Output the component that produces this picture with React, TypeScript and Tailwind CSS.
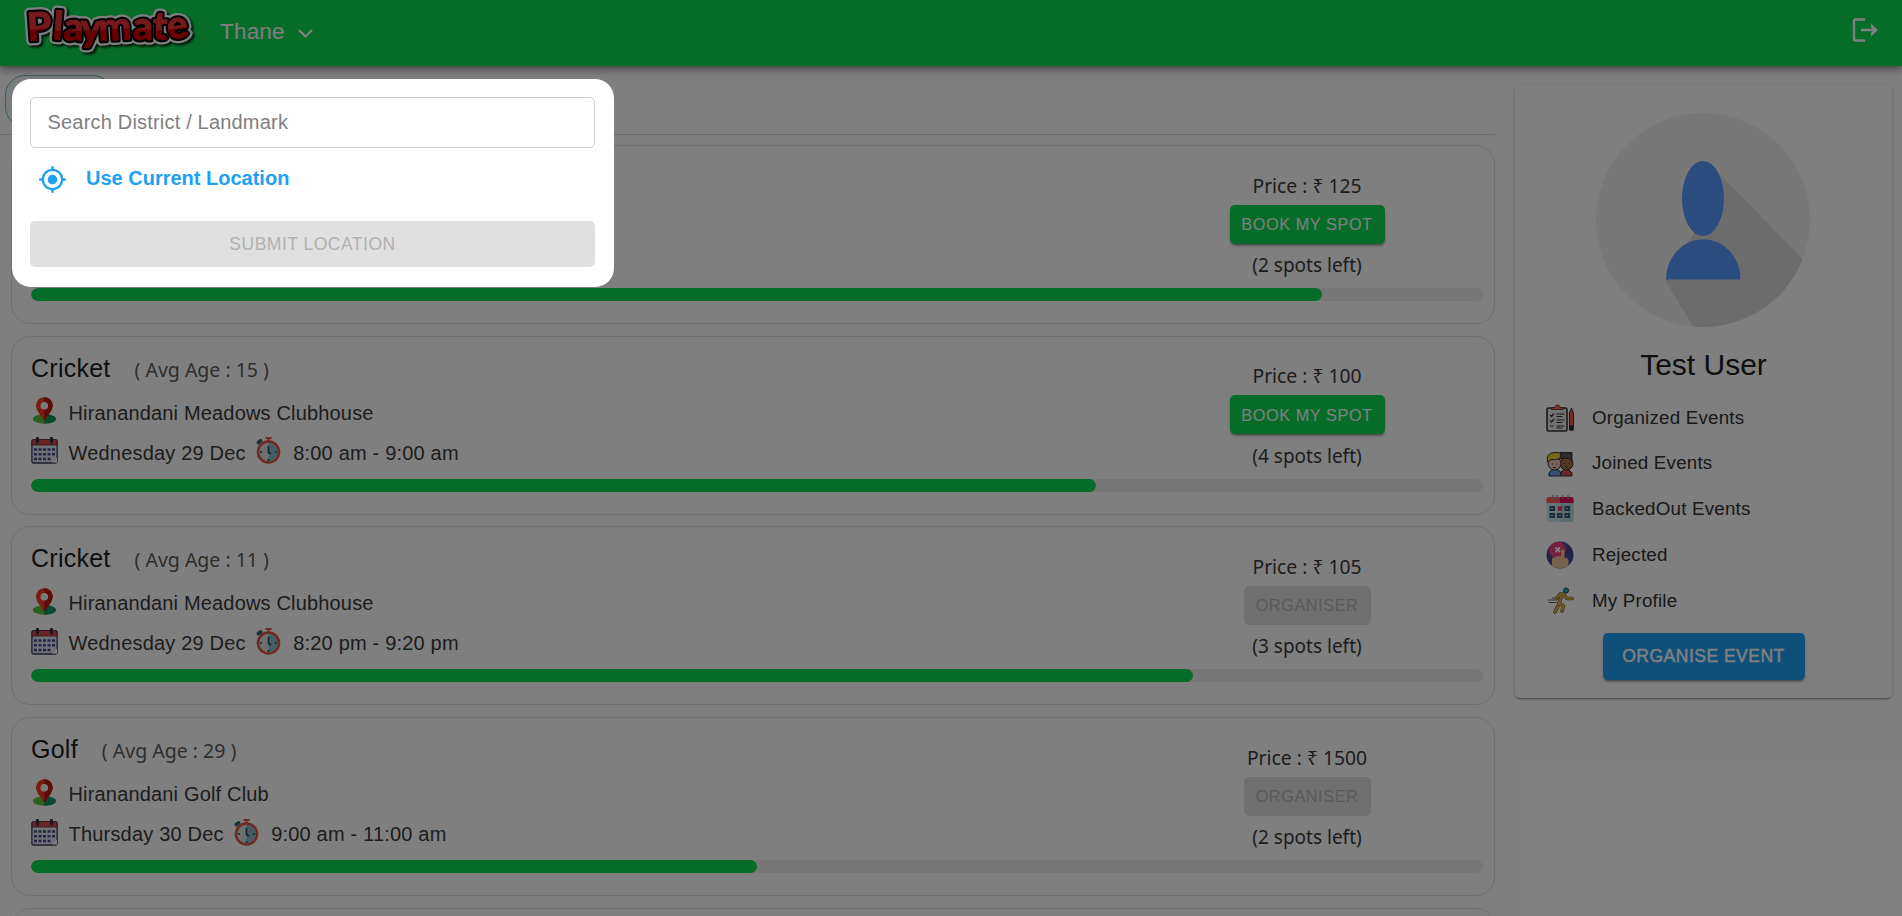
import React from "react";

type EventItem = {
  sport?: string; age?: number; place?: string; date?: string; time?: string;
  price: number; spots: number; action: string; fill: number;
};

const events: EventItem[] = [
  { price: 125, spots: 2, action: "BOOK MY SPOT", fill: 88.9 },
  { sport: "Cricket", age: 15, place: "Hiranandani Meadows Clubhouse", date: "Wednesday 29 Dec", time: "8:00 am - 9:00 am", price: 100, spots: 4, action: "BOOK MY SPOT", fill: 73.33 },
  { sport: "Cricket", age: 11, place: "Hiranandani Meadows Clubhouse", date: "Wednesday 29 Dec", time: "8:20 pm - 9:20 pm", price: 105, spots: 3, action: "ORGANISER", fill: 80 },
  { sport: "Golf", age: 29, place: "Hiranandani Golf Club", date: "Thursday 30 Dec", time: "9:00 am - 11:00 am", price: 1500, spots: 2, action: "ORGANISER", fill: 50 },
];

const letters = [
  { c: "P", x: 28, y: 41, r: -4 }, { c: "l", x: 52, y: 39, r: 5 }, { c: "a", x: 63, y: 40, r: 3 },
  { c: "y", x: 80, y: 41, r: 2 }, { c: "m", x: 99, y: 41, r: -3 }, { c: "a", x: 133, y: 40, r: 0 },
  { c: "t", x: 152, y: 39, r: 3 }, { c: "e", x: 169, y: 40, r: -10 },
];

function Logo() {
  const layer = (fill: string, stroke: string, width: number) => (
    <g aria-hidden={fill === "#fff" || fill === "#000"} fill={fill} stroke={stroke} strokeWidth={width} strokeLinejoin="round" fontFamily="Lato, sans-serif" fontWeight="900" fontSize="39">
      {letters.map((l, i) => (
        <text key={i} x={l.x} y={l.y} transform={`rotate(${l.r} ${l.x} ${l.y})`}>{l.c}</text>
      ))}
    </g>
  );
  return (
    <svg className="block h-[66px] w-[200px] overflow-visible drop-shadow-[2px_2px_1px_rgba(0,0,0,0.8)]" viewBox="0 0 200 66">
      <defs>
        <linearGradient id="red" gradientUnits="userSpaceOnUse" x1="0" y1="8" x2="0" y2="50">
          <stop offset="0.5" stopColor="#ee3236" />
          <stop offset="0.54" stopColor="#d00008" />
        </linearGradient>
      </defs>
      {layer("#fff", "#fff", 9.5)}
      {layer("#000", "#000", 5)}
      {layer("url(#red)", "url(#red)", 0.8)}
    </svg>
  );
}

function Pin() {
  return (
    <svg className="h-[27px] w-[27px]" viewBox="0 0 27 27">
      <ellipse cx="13.3" cy="22" rx="11.7" ry="4.7" fill="#57c23e" />
      <path d="M13.3 17.3c7 0 11.7 2.1 11.7 4.7s-5 4.7-11.7 4.7z" fill="#10945e" />
      <path d="M13.3 24C9.5 17.5 5 13.5 5 8.5a8.3 8.3 0 0 1 16.7 0c0 5-4.6 9-8.4 15.5z" fill="#f03a24" />
      <path d="M13.3.2a8.3 8.3 0 0 1 8.4 8.3c0 5-4.6 9-8.4 15.5z" fill="#b81a14" />
      <circle cx="13.3" cy="8.8" r="3.8" fill="#f4f4f4" />
    </svg>
  );
}

function Calendar() {
  return (
    <svg className="h-[27px] w-[27px]" viewBox="0 0 27 27">
      <rect x="0.9" y="3" width="25.2" height="23" rx="1.5" fill="#e0e2ec" stroke="#3b3a55" strokeWidth="1.3" />
      <path d="M1 8V4q0-1.5 1.5-1.5h22Q26 2.500 26 4v4z" fill="#d84a4c" stroke="#5b2a38" strokeWidth="0.8" />
      <path d="M6.500 1.500v3.500M20.500 1.500v3.500" stroke="#33334d" strokeWidth="3.200" strokeLinecap="round" />
      <g fill="none" stroke="#4b4c86" strokeWidth="2.600" strokeDasharray="3 1.500">
        <path d="M3 12.500h21" /><path d="M3 17.300h21" /><path d="M3 22h17" />
      </g>
      <path d="M21 25.500l5-5v5z" fill="#fff" />
    </svg>
  );
}

function Clock() {
  return (
    <svg className="h-[27px] w-[27px]" viewBox="0 0 27 27">
      <path d="M10.500 1h6M13.500 1v4" stroke="#d9594a" strokeWidth="2" />
      <path d="M3.500 5.500l2-1.500" stroke="#2d6474" strokeWidth="4" strokeLinecap="round" />
      <circle cx="13.500" cy="15" r="10.500" fill="#d9e2e0" stroke="#dd5443" strokeWidth="2.600" />
      <path d="M13.500 5.800a9.200 9.200 0 0 1 0 18.400z" fill="#84bcc8" />
      <path d="M13.500 9v6.500l2.500 1.500M5 15h2M20 15h2M13.500 22v2" stroke="#244b5b" strokeWidth="1.700" fill="none" />
    </svg>
  );
}

function EventCard({ e }: { e: EventItem }) {
  return (
    <article className="box-border h-[179px] shrink-0 rounded-[19px] border-[1.500px] border-[#e0e0e0] bg-white pl-[19px] pr-[11px]">
      <div className="flex h-[134px]">
        <div className="flex-1 pt-[12px]">
          {e.sport && (
            <>
              <div className="flex h-[42px] items-start">
                <h2 className="text-[25px] leading-[38px] tracking-[0.250px] text-[#212121]">{e.sport}</h2>
                <span className="ml-[24px] mt-[2px] whitespace-nowrap font-['Noto_Sans'] text-[19.500px] leading-[38px] text-[#5c5c5c]">( Avg Age : {e.age} )</span>
              </div>
              <div className="flex h-[40px] items-center gap-[10.500px]">
                <Pin />
                <span className="mt-1 text-[20px] tracking-[0.170px] text-[#3a3a3a]">{e.place}</span>
              </div>
              <div className="flex h-[40px] items-center">
                <Calendar />
                <span className="ml-[10.500px] mt-1 text-[20px] tracking-[0.190px] text-[#3a3a3a]">{e.date}</span>
                <span className="ml-[9.500px]"><Clock /></span>
                <span className="ml-[11px] mt-1 text-[20px] tracking-[0.190px] text-[#3a3a3a]">{e.time}</span>
              </div>
            </>
          )}
        </div>
        <div className="flex w-[352px] flex-col items-center pt-[24.500px] font-['Noto_Sans']">
          <p className="h-[36px] whitespace-nowrap text-[19.300px] leading-[29px] text-[#3a3a3a]">Price : ₹ {e.price}</p>
          {e.action === "ORGANISER" ? (
            <button className="h-[39px] w-[127px] shrink-0 rounded-[5px] bg-[#e0e0e0] font-['Liberation_Sans'] text-[16.250px] tracking-[0.580px] text-[#b4b4b4]">{e.action}</button>
          ) : (
            <button className="h-[39px] w-[155px] shrink-0 rounded-[5px] bg-[#0cda50] font-['Liberation_Sans'] text-[16.250px] tracking-[0.580px] text-white shadow-[0_3px_2px_-2px_rgba(0,0,0,0.3),0_2px_3px_rgba(0,0,0,0.25)]">{e.action}</button>
          )}
          <p className="mt-[6.500px] whitespace-nowrap text-[19px] leading-[30px] text-[#3a3a3a]">({e.spots} spots left)</p>
        </div>
      </div>
      <div className="mt-[8px] h-[13px] overflow-hidden rounded-[7px] bg-[#eee]">
        <div className="h-full rounded-[7px] bg-[#0cda50]" style={{ width: `${e.fill}%` }} />
      </div>
    </article>
  );
}

function Avatar() {
  return (
    <svg className="h-[214px] w-[214px]" viewBox="0 0 214 214">
      <defs><clipPath id="disc"><circle cx="107" cy="107" r="107" /></clipPath></defs>
      <g clipPath="url(#disc)">
        <rect width="214" height="214" fill="#f1f1f1" />
        <path d="M122 59L220 160V220H101L69 167L98 120z" fill="#d9d9d9" />
      </g>
      <ellipse cx="107" cy="85.500" rx="21" ry="37.500" fill="#5498ff" />
      <path d="M70 166.500a37 40 0 0 1 74.500 0z" fill="#5498ff" />
    </svg>
  );
}

const icons = [
  <svg className="h-[28px] w-[28px]" viewBox="0 0 28 28">
    <rect x="1" y="4" width="20" height="23" rx="1.500" fill="#e6e6e6" stroke="#333" strokeWidth="1.600" />
    <path d="M5.500 5.500V3.500h3L10.500 1h2l2 2.500h3v2z" fill="#f06a4a" stroke="#333" strokeWidth="0.800" />
    <path d="M4 11l1.500 1.500L8 9.500M4 16.500L5.500 18 8 15M10.500 10h8M10.500 12.500h6M10.500 16h8M10.500 18.500h6M10.500 22h8M10.500 24h6M4 22h3.500" fill="none" stroke="#333" strokeWidth="1.200" />
    <path d="M23.500 9l2-5 2 5v17h-4z" fill="#e95f45" stroke="#333" strokeWidth="1" /><path d="M23.500 21h4v5.500h-4z" fill="#333" />
  </svg>,
  <svg className="h-[28px] w-[28px]" viewBox="0 0 28 28" stroke="#333" strokeWidth="1">
    <path d="M3 26v-3q2-4 6-4t6 4v3z" fill="#65a3ec" /><path d="M15 26v-4q2-3 5-3t6 4v3z" fill="#d84c50" />
    <circle cx="20.500" cy="13.500" r="6.500" fill="#a96e42" /><path d="M14 2.500h12v9l-2-3h-10z" fill="#56565f" />
    <circle cx="8.500" cy="13.500" r="6.500" fill="#f0c8b2" /><path d="M1.500 12Q0 3 8 2.500h5q3 2 1 6-5 2-9 1z" fill="#f0d02c" />
    <path d="M6.500 13.500v1M11 13.500v1M18.500 13v1M23 13v1M7 17.500h3M19 17h3" />
  </svg>,
  <svg className="h-[28px] w-[28px]" viewBox="0 0 28 28">
    <rect x="0.500" y="3" width="27" height="24" rx="2" fill="#cfe6e8" /><path d="M14 3h13.500v22q0 2-2 2H14z" fill="#b4d8de" />
    <path d="M.5 8V4q0-2 2-2H14v6z" fill="#fb5a60" /><path d="M14 2h11.500q2 0 2 2v4H14z" fill="#e00856" />
    <path d="M6.500 0v4M11 0v4M17 0v4M22 0v4" stroke="#8e98a4" strokeWidth="1.300" />
    <g fill="none" stroke="#315e76" strokeWidth="2"><rect x="4.500" y="12" width="3.500" height="3" /><rect x="19.500" y="12" width="3.500" height="3" /><rect x="4.500" y="19" width="3.500" height="3" /><rect x="12" y="19" width="3.500" height="3" /><rect x="19.500" y="19" width="3.500" height="3" /></g>
    <path d="M12 11.500l4 4m0-4l-4 4" stroke="#f52a62" strokeWidth="2" />
  </svg>,
  <svg className="h-[28px] w-[28px]" viewBox="0 0 28 28">
    <defs><clipPath id="rej"><circle cx="14" cy="14" r="13.500" /></clipPath></defs>
    <g clipPath="url(#rej)"><rect width="28" height="28" fill="#46478e" /><circle cx="11.500" cy="9" r="8.500" fill="#e8457f" />
      <path d="M6 28V17.500q1.500-2 3.500-1 1.500-2 3.500-1 1-1 2 0V9.500q1.500-2 3.500 0v7q4 0 4 3.500v8z" fill="#eec49a" /></g>
    <path d="M9.500 6.500l4.500 4.500m0-4.500L9.500 11" stroke="#fff" strokeWidth="1.800" />
  </svg>,
  <svg className="h-[28px] w-[28px]" viewBox="0 0 28 28" fill="none" strokeLinecap="round" strokeLinejoin="round">
    <path d="M2 13h9M3 15.500h7M6 11h4" stroke="#666" strokeWidth="1" />
    <g stroke="#6b5a2c"><path d="M11 11l3-4 3.500 0 3.500 4.500h5M16 8l-3 8 4.500 3-1.500 5M13 17l-4 8" strokeWidth="3.600" /></g>
    <g stroke="#dcb043"><path d="M11 11l3-4 3.500 0 3.500 4.500h5M16 8l-3 8 4.500 3-1.500 5M13 17l-4 8" strokeWidth="2.300" /></g>
    <circle cx="20" cy="3.500" r="2.600" fill="#28a0a4" stroke="#31525b" />
  </svg>,
];
const menu = ["Organized Events", "Joined Events", "BackedOut Events", "Rejected", "My Profile"];

export default function App() {
  return (
    <div className="relative flex h-[916px] w-full flex-col overflow-hidden bg-white font-['Liberation_Sans',sans-serif]">
      <header className="relative flex h-[66px] shrink-0 items-center bg-[#0cda50] text-white shadow-[0_2px_5px_-1px_rgba(0,0,0,0.3),0_5px_7px_rgba(0,0,0,0.2),0_1px_13px_rgba(0,0,0,0.16)]">
        <Logo />
        <span className="ml-[20px] mt-[-2px] text-[22.500px] tracking-[0.200px]">Thane</span>
        <svg className="ml-[13px] h-[9px] w-[15px]" viewBox="0 0 15 9" fill="none" stroke="currentColor" strokeWidth="2.200"><path d="M1 1l6.500 6.500L14 1" /></svg>
        <svg className="ml-auto mr-[24px] mt-[-7px] h-[24px] w-[26px]" viewBox="0 0 26 24" fill="none" stroke="currentColor" strokeWidth="2.400"><path d="M13 1.500H3.500Q2 1.500 2 3v18q0 1.500 1.500 1.500H13M9 12h14" /><path d="M19 5.500l7 6.500-7 6.500v-3.500l2.500-3-2.500-3z" fill="currentColor" stroke="none" /></svg>
      </header>
      <div className="flex min-h-0 flex-1 items-start">
        <main className="w-[1495px] shrink-0">
          <div className="h-[69px] border-b-[1.500px] border-[#dadada] pl-[5px] pt-[9px]">
            <div className="h-[52px] w-[108px] rounded-[20px] border-[1.500px] border-[#6dbba9] bg-[#f3f8ff]" />
          </div>
          <div className="flex flex-col gap-[11.700px] pl-[11px] pt-[10px]">
            {events.map((e, i) => <EventCard key={i} e={e} />)}
            <div className="h-[179px] shrink-0 rounded-[19px] border-[1.500px] border-[#e0e0e0]" />
          </div>
        </main>
        <aside className="ml-[20px] mt-[19px] flex h-[613px] w-[377px] flex-col items-center rounded-[5px] bg-white pt-[28px] shadow-[0_3px_2px_-2px_rgba(0,0,0,0.3),0_1px_3px_rgba(0,0,0,0.25)]">
          <div className="pr-[2px]"><Avatar /></div>
          <h1 className="mt-[19px] text-[30px] leading-[38px] text-[#212121]">Test User</h1>
          <ul className="mt-[11px] w-full pl-[31px]">
            {menu.map((m, i) => (
              <li key={m} className="flex h-[45.700px] items-center gap-[18px] text-[18.750px] tracking-[0.200px] text-[#333]">{icons[i]}<span>{m}</span></li>
            ))}
          </ul>
          <button className="mt-[9.500px] h-[47px] w-[202px] rounded-[5px] bg-[#1da1f2] text-[17.500px] tracking-[0.500px] text-white [-webkit-text-stroke:0.4px_white] shadow-[0_3px_2px_-2px_rgba(0,0,0,0.3),0_2px_3px_rgba(0,0,0,0.25)]">ORGANISE EVENT</button>
        </aside>
      </div>
      <div className="absolute inset-0 bg-black/50 pl-[11.500px] pt-[78.500px]">
        <section className="flex h-[208px] w-[602px] flex-col rounded-[19px] bg-white px-[18.500px] pt-[18.500px]">
          <input className="h-[51px] shrink-0 rounded-[5px] border-[1.500px] border-[#cfcfcf] px-[16.500px] text-[20px] tracking-[0.190px] placeholder:text-[#808080]" placeholder="Search District / Landmark" />
          <div className="mt-[17px] flex h-[28px] items-center pl-[8px] text-[#1da1f2]">
            <svg className="h-[29px] w-[29px]" viewBox="0 0 24 24" fill="currentColor"><path d="M12 8c-2.210 0-4 1.790-4 4s1.790 4 4 4 4-1.790 4-4-1.790-4-4-4zm8.940 3A8.994 8.994 0 0 0 13 3.060V1h-2v2.060A8.994 8.994 0 0 0 3.060 11H1v2h2.060A8.994 8.994 0 0 0 11 20.940V23h2v-2.060A8.994 8.994 0 0 0 20.940 13H23v-2h-2.060zM12 19c-3.870 0-7-3.130-7-7s3.130-7 7-7 7 3.130 7 7-3.130 7-7 7z" /></svg>
            <span className="ml-[19px] mt-[-2px] text-[20px] font-bold">Use Current Location</span>
          </div>
          <button className="mt-[28px] h-[46px] shrink-0 rounded-[5px] bg-[#e0e0e0] text-[17.500px] tracking-[0.500px] text-[#b0b0b0]">SUBMIT LOCATION</button>
        </section>
      </div>
    </div>
  );
}
